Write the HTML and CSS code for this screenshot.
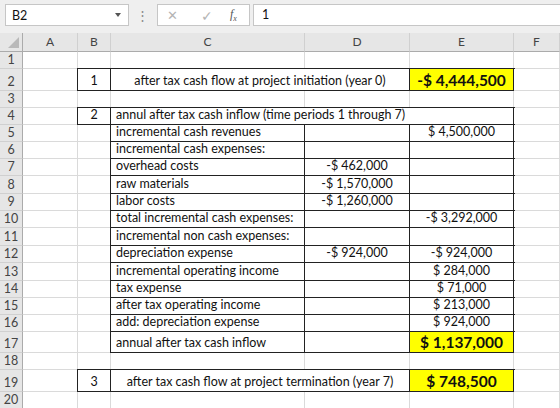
FILE: index.html
```html
<!DOCTYPE html>
<html lang="en">
<head>
    <meta charset="UTF-8">
    <meta name="viewport" content="width=device-width, initial-scale=1.0">
    <title>Cash flow</title>

    <link rel="stylesheet" href="styles.css">
</head>
<body>

    <div class="toolbar">
        <div class="namebox">
            <span>B2</span>
            <span class="drop"></span>
        </div>
        <div class="grip">⋮</div>
        <div class="fxbox">
            <span class="cancel">✕</span>
            <span class="ok">✓</span>
            <span class="fx"><i>f</i><sub>x</sub></span>
        </div>
        <div class="formula">1</div>
    </div>

    <div class="sheet">

        <div class="row head">
            <div class="corner"><span></span></div>
            <div class="ch">A</div>
            <div class="ch">B</div>
            <div class="ch">C</div>
            <div class="ch">D</div>
            <div class="ch">E</div>
            <div class="ch">F</div>
        </div>

        <div class="row">
            <div class="rh">1</div>
            <div class="c"></div><div class="c"></div><div class="c"></div><div class="c"></div><div class="c"></div><div class="c"></div>
        </div>

        <div class="row tall">
            <div class="rh">2</div>
            <div class="c"></div>
            <div class="c b mid">1</div>
            <div class="c b mid span2">after tax cash flow at project initiation (year 0)</div>
            <div class="c b mid hi">-$ 4,444,500</div>
            <div class="c"></div>
        </div>

        <div class="row">
            <div class="rh">3</div>
            <div class="c"></div><div class="c"></div><div class="c"></div><div class="c"></div><div class="c"></div><div class="c"></div>
        </div>

        <div class="row">
            <div class="rh">4</div>
            <div class="c"></div>
            <div class="c b mid">2</div>
            <div class="c b span3">annul after tax cash inflow (time periods 1 through 7)</div>
            <div class="c"></div>
        </div>

        <div class="row">
            <div class="rh">5</div>
            <div class="c"></div><div class="c"></div>
            <div class="c b">incremental cash revenues</div>
            <div class="c b mid"></div>
            <div class="c b mid">$ 4,500,000</div>
            <div class="c"></div>
        </div>

        <div class="row">
            <div class="rh">6</div>
            <div class="c"></div><div class="c"></div>
            <div class="c b">incremental cash expenses:</div>
            <div class="c b mid"></div>
            <div class="c b mid"></div>
            <div class="c"></div>
        </div>

        <div class="row">
            <div class="rh">7</div>
            <div class="c"></div><div class="c"></div>
            <div class="c b">overhead costs</div>
            <div class="c b mid">-$ 462,000</div>
            <div class="c b mid"></div>
            <div class="c"></div>
        </div>

        <div class="row r18">
            <div class="rh">8</div>
            <div class="c"></div><div class="c"></div>
            <div class="c b">raw materials</div>
            <div class="c b mid">-$ 1,570,000</div>
            <div class="c b mid"></div>
            <div class="c"></div>
        </div>

        <div class="row">
            <div class="rh">9</div>
            <div class="c"></div><div class="c"></div>
            <div class="c b">labor costs</div>
            <div class="c b mid">-$ 1,260,000</div>
            <div class="c b mid"></div>
            <div class="c"></div>
        </div>

        <div class="row">
            <div class="rh">10</div>
            <div class="c"></div><div class="c"></div>
            <div class="c b">total incremental cash expenses:</div>
            <div class="c b mid"></div>
            <div class="c b mid">-$ 3,292,000</div>
            <div class="c"></div>
        </div>

        <div class="row r18">
            <div class="rh">11</div>
            <div class="c"></div><div class="c"></div>
            <div class="c b">incremental non cash expenses:</div>
            <div class="c b mid"></div>
            <div class="c b mid"></div>
            <div class="c"></div>
        </div>

        <div class="row">
            <div class="rh">12</div>
            <div class="c"></div><div class="c"></div>
            <div class="c b">depreciation expense</div>
            <div class="c b mid">-$ 924,000</div>
            <div class="c b mid">-$ 924,000</div>
            <div class="c"></div>
        </div>

        <div class="row r18">
            <div class="rh">13</div>
            <div class="c"></div><div class="c"></div>
            <div class="c b">incremental operating income</div>
            <div class="c b mid"></div>
            <div class="c b mid">$ 284,000</div>
            <div class="c"></div>
        </div>

        <div class="row">
            <div class="rh">14</div>
            <div class="c"></div><div class="c"></div>
            <div class="c b">tax expense</div>
            <div class="c b mid"></div>
            <div class="c b mid">$ 71,000</div>
            <div class="c"></div>
        </div>

        <div class="row">
            <div class="rh">15</div>
            <div class="c"></div><div class="c"></div>
            <div class="c b">after tax operating income</div>
            <div class="c b mid"></div>
            <div class="c b mid">$ 213,000</div>
            <div class="c"></div>
        </div>

        <div class="row">
            <div class="rh">16</div>
            <div class="c"></div><div class="c"></div>
            <div class="c b">add: depreciation expense</div>
            <div class="c b mid"></div>
            <div class="c b mid">$ 924,000</div>
            <div class="c"></div>
        </div>

        <div class="row r21">
            <div class="rh">17</div>
            <div class="c"></div><div class="c"></div>
            <div class="c b">annual after tax cash inflow</div>
            <div class="c b mid"></div>
            <div class="c b mid hi">$ 1,137,000</div>
            <div class="c"></div>
        </div>

        <div class="row">
            <div class="rh">18</div>
            <div class="c"></div><div class="c"></div><div class="c"></div><div class="c"></div><div class="c"></div><div class="c"></div>
        </div>

        <div class="row tall">
            <div class="rh">19</div>
            <div class="c"></div>
            <div class="c b mid">3</div>
            <div class="c b mid span2">after tax cash flow at project termination (year 7)</div>
            <div class="c b mid hi">$ 748,500</div>
            <div class="c"></div>
        </div>

        <div class="row">
            <div class="rh">20</div>
            <div class="c"></div><div class="c"></div><div class="c"></div><div class="c"></div><div class="c"></div><div class="c"></div>
        </div>

    </div>

</body>
</html>
```

FILE: styles.css
```css
*{
    border: 0;
    margin: 0;
    padding: 0;
    box-sizing: border-box;
}

html, body{
    width: 560px;
    height: 408px;
    overflow: hidden;
}

body{
    background-color: #ffffff;
    font-family: Lato, "Open Sans", sans-serif;
    color: #111111;
}

/* formula bar */

.toolbar{
    height: 33px;
    background-color: #efefef;
    display: flex;
    align-items: flex-start;
    padding: 4px 0 0 5px;
}

.namebox{
    width: 124px;
    height: 22px;
    background-color: #ffffff;
    border: 1px solid #c6c6c6;
    display: flex;
    align-items: center;
    justify-content: space-between;
    padding: 0 7px 0 6px;
    font-size: 12.5px;
}

.drop{
    width: 0;
    height: 0;
    border-left: 3.5px solid transparent;
    border-right: 3.5px solid transparent;
    border-top: 4px solid #555555;
}

.grip{
    width: 27px;
    text-align: center;
    color: #8a8a8a;
    font-size: 13px;
    line-height: 22px;
}

.fxbox{
    width: 93px;
    height: 22px;
    margin-left: 1px;
    background-color: #ffffff;
    border: 1px solid #c6c6c6;
    display: flex;
    align-items: center;
    padding-left: 9px;
}

.cancel{
    width: 34px;
    color: #b4b4b4;
    font-size: 13px;
}

.ok{
    width: 29px;
    color: #b4b4b4;
    font-size: 14px;
}

.fx{
    font-family: "Liberation Serif", serif;
    font-size: 12px;
    color: #555555;
}

.fx sub{
    font-size: 8px;
    font-style: italic;
}

.formula{
    flex: 1;
    height: 22px;
    margin-left: 3px;
    background-color: #ffffff;
    border: 1px solid #c6c6c6;
    border-right: 0;
    padding-left: 8px;
    font-size: 12.5px;
    line-height: 20px;
}

/* grid */

.row{
    display: grid;
    grid-template-columns: 23px 55px 33px 194px 105px 104px 1fr;
    height: 17px;
}

.row.tall{
    height: 22px;
}

.row.r18{
    height: 18px;
}

.row.r21{
    height: 21px;
}

.row.head{
    height: 19px;
}

.corner, .ch{
    background-color: #e6e6e6;
    border-bottom: 1px solid #ababab;
    border-right: 1px solid #d0d0d0;
}

.corner{
    border-right: 1px solid #ababab;
    position: relative;
}

.corner span{
    position: absolute;
    right: 3px;
    bottom: 3px;
    width: 0;
    height: 0;
    border-left: 11px solid transparent;
    border-bottom: 11px solid #b9b9b9;
}

.ch{
    text-align: center;
    font-size: 12px;
    line-height: 18px;
    color: #444444;
}

.rh{
    background-color: #e6e6e6;
    border-right: 1px solid #ababab;
    border-bottom: 1px solid #d0d0d0;
    font-size: 12.5px;
    color: #444444;
    display: flex;
    align-items: flex-end;
    justify-content: center;
    padding-bottom: 1px;
    line-height: 14px;
}

.c{
    background-color: #ffffff;
    border-right: 1px solid #dadada;
    border-bottom: 1px solid #dadada;
    font-size: 12.5px;
    line-height: 14px;
    display: flex;
    align-items: flex-end;
    padding: 0 0 2px 5px;
    white-space: nowrap;
}

/* cells with a black frame */
.c.b{
    border-color: #222222;
    box-shadow: 0 0 0 1px #222222;
}

.mid{
    justify-content: center;
    padding-left: 0;
}

.span2{
    grid-column: span 2;
}

.span3{
    grid-column: span 3;
}

.hi{
    background-color: #ffff00;
    font-weight: bold;
    font-size: 15.5px;
    line-height: 18px;
    padding-bottom: 1px;
}
```
